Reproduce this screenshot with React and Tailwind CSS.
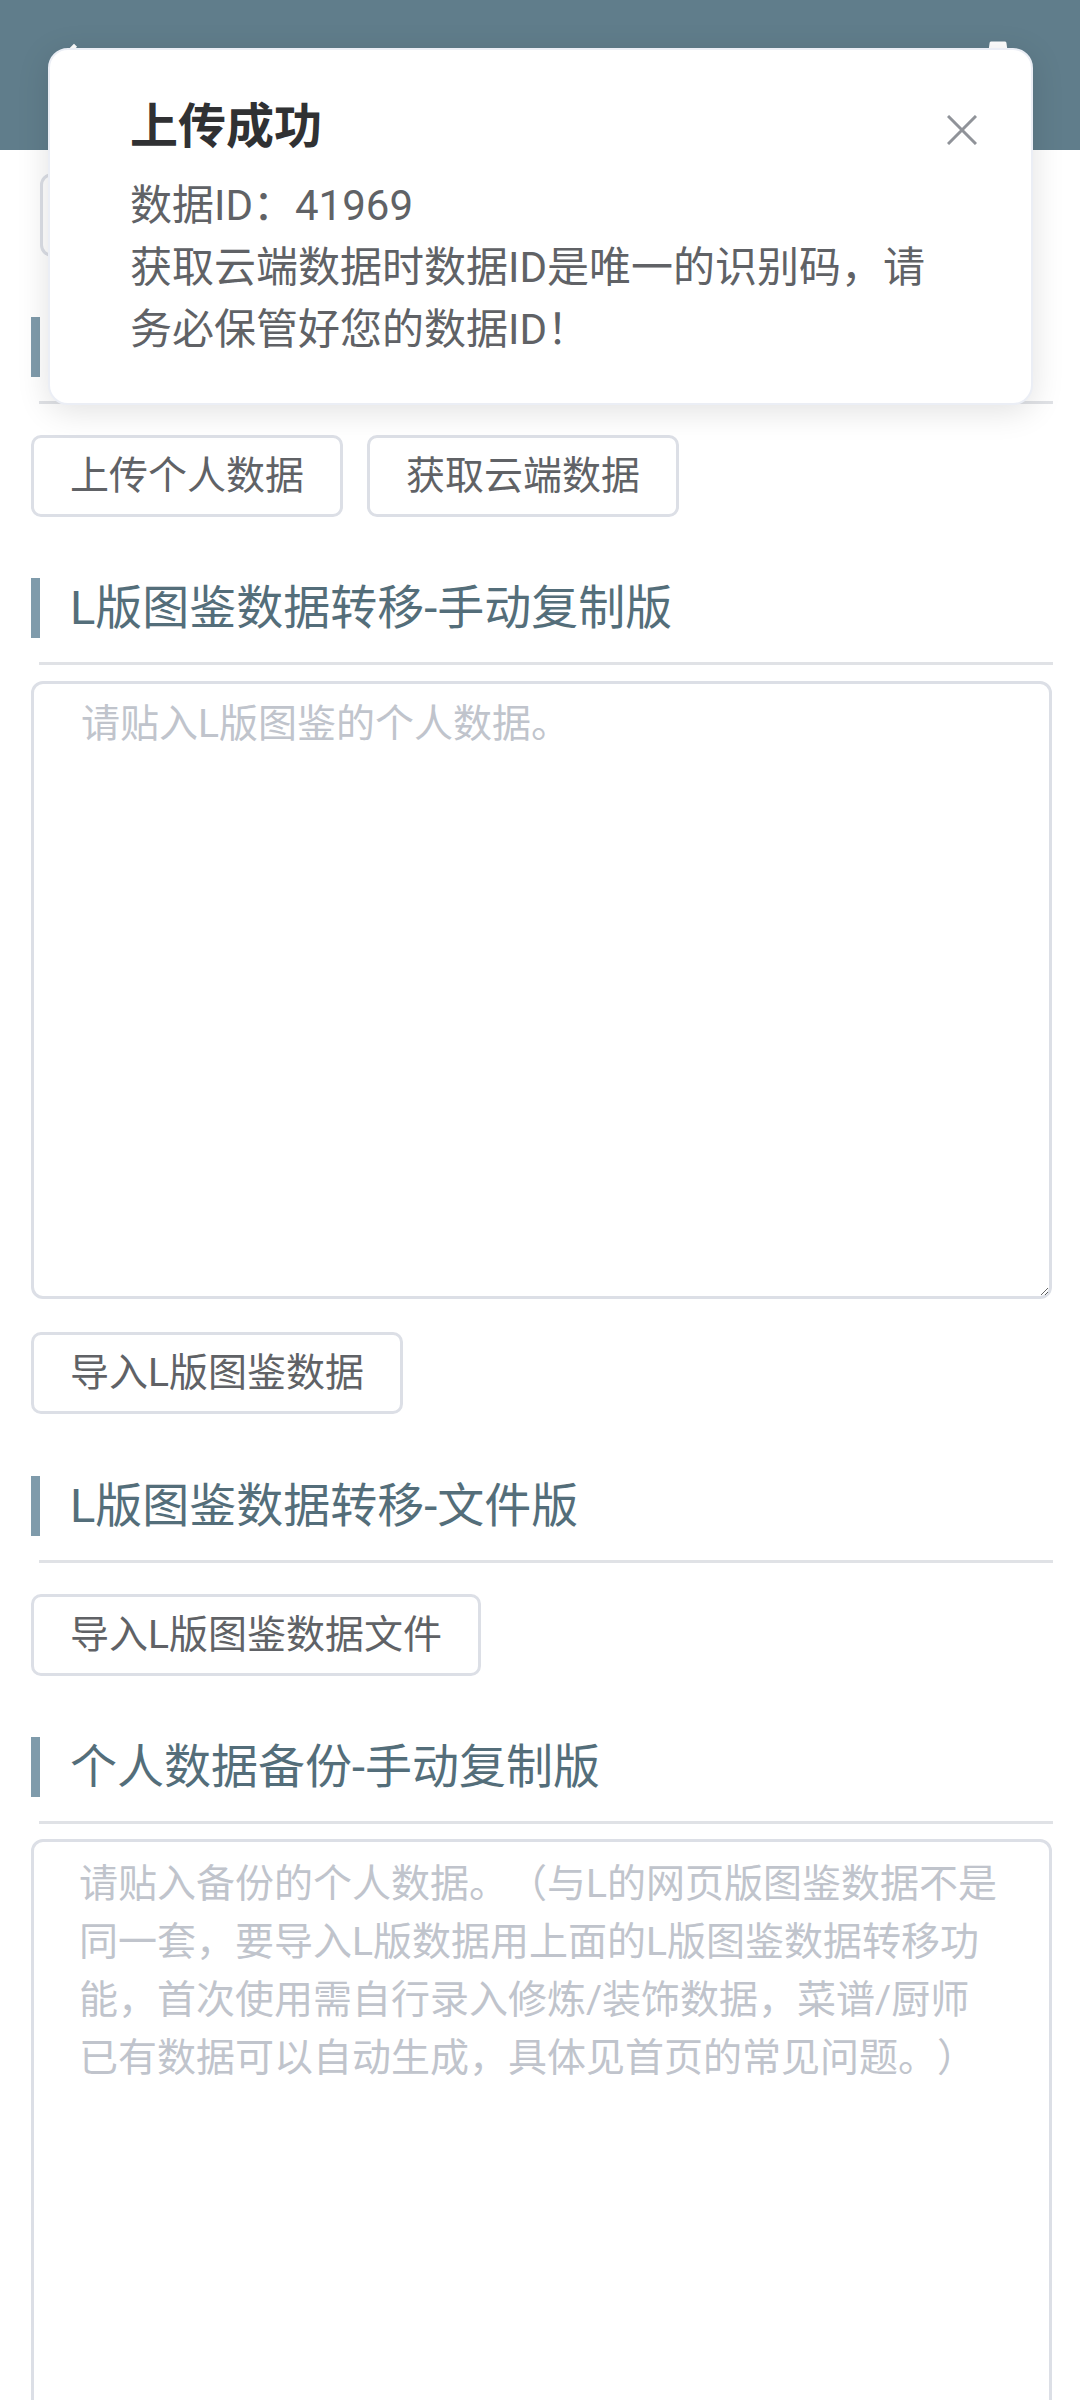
import React from 'react';
import { MdArrowBack, MdSettings } from 'react-icons/md';

const font = "font-['Roboto','Noto_Sans_CJK_SC',sans-serif]";

const SectionTitle = ({ title, className }) => (
    <div className={className}>
        <div className="flex items-center h-[60px]">
            <div className="w-[9px] h-[60px] bg-[#7f9bab]" />
            {title && (
                <h2 className="ml-[30px] text-[47px] leading-[60px] font-normal text-[#546e7a] whitespace-nowrap">{title}</h2>
            )}
        </div>
        <div className="mt-[24px] ml-[8px] mr-[-1px] h-[3px] bg-[#e0e2e6]" />
    </div>
);

const Button = ({ children }) => (
    <button className="h-[82px] px-[36px] bg-white border-[3px] border-[#dcdfe6] rounded-[10px] text-[39px] leading-none text-[#606266] whitespace-nowrap">
        {children}
    </button>
);

const backupHint =
    '请贴入备份的个人数据。（与L的网页版图鉴数据不是\n同一套，要导入L版数据用上面的L版图鉴数据转移功\n能，首次使用需自行录入修炼/装饰数据，菜谱/厨师\n已有数据可以自动生成，具体见首页的常见问题。）';

const App = () => {
    return (
        <div className={`relative min-h-[2400px] overflow-hidden bg-white [text-spacing-trim:space-all] ${font}`}>
            <header className="h-[150px] bg-[#607d8b] flex items-start justify-between text-white">
                <MdArrowBack className="mt-[35px] ml-[48px]" size={52} />
                <MdSettings className="mt-[33px] mr-[40px]" size={84} />
            </header>

            <main className="pl-[31px] pr-[28px] pt-[23px] pb-[40px] flex flex-col items-start">
                <div className="ml-[9px] w-[660px] h-[84px] border-[3px] border-[#dcdfe6] rounded-[12px] bg-white" />

                {/* heading text sits under the dialog */}
                <SectionTitle className="mt-[60px] w-full" />
                <div className="mt-[31px] flex gap-[24px]">
                    <Button>上传个人数据</Button>
                    <Button>获取云端数据</Button>
                </div>

                <SectionTitle className="mt-[61px] w-full" title="L版图鉴数据转移-手动复制版" />
                <textarea
                    className="mt-[16px] w-full h-[618px] border-[3px] border-[#dcdfe6] rounded-[12px] pl-[47px] pr-[30px] pt-[11px] text-[39px] leading-[58px] text-[#606266] placeholder:text-[#c0c4cc] outline-none"
                    placeholder="请贴入L版图鉴的个人数据。"
                />
                <div className="mt-[33px]">
                    <Button>导入L版图鉴数据</Button>
                </div>

                <SectionTitle className="mt-[62px] w-full" title="L版图鉴数据转移-文件版" />
                <div className="mt-[31px]">
                    <Button>导入L版图鉴数据文件</Button>
                </div>

                <SectionTitle className="mt-[61px] w-full" title="个人数据备份-手动复制版" />
                <textarea
                    className="mt-[15px] w-full h-[700px] border-[3px] border-[#dcdfe6] rounded-[12px] pl-[45px] pr-[12px] pt-[13px] text-[39px] leading-[58px] text-[#606266] placeholder:text-[#c0c4cc] outline-none"
                    placeholder={backupHint}
                />
            </main>

            <div className="absolute left-[48px] top-[48px] w-[985px] h-[357px] bg-white rounded-[20px] border-[2px] border-[#ebeef5] shadow-[0_6px_33px_rgba(0,0,0,0.12)]">
                <div className="pl-[80px] pt-[49px] pr-[40px] relative">
                    <h3 className="text-[48px] leading-[56px] font-bold text-[#303133]">上传成功</h3>
                    <div className="mt-[20px] w-[815px] text-[42px] leading-[62px] text-[#606266]">
                        <p>数据ID：41969</p>
                        <p>获取云端数据时数据ID是唯一的识别码，请务必保管好您的数据ID！</p>
                    </div>
                    <button className="absolute top-[65px] right-[54px] w-[30px] h-[30px]">
                        <svg viewBox="0 0 30 30" className="w-[30px] h-[30px]" fill="none" stroke="#909399" strokeWidth="3">
                            <path d="M1 1L29 29M29 1L1 29" />
                        </svg>
                    </button>
                </div>
            </div>
        </div>
    );
};

export default App;
